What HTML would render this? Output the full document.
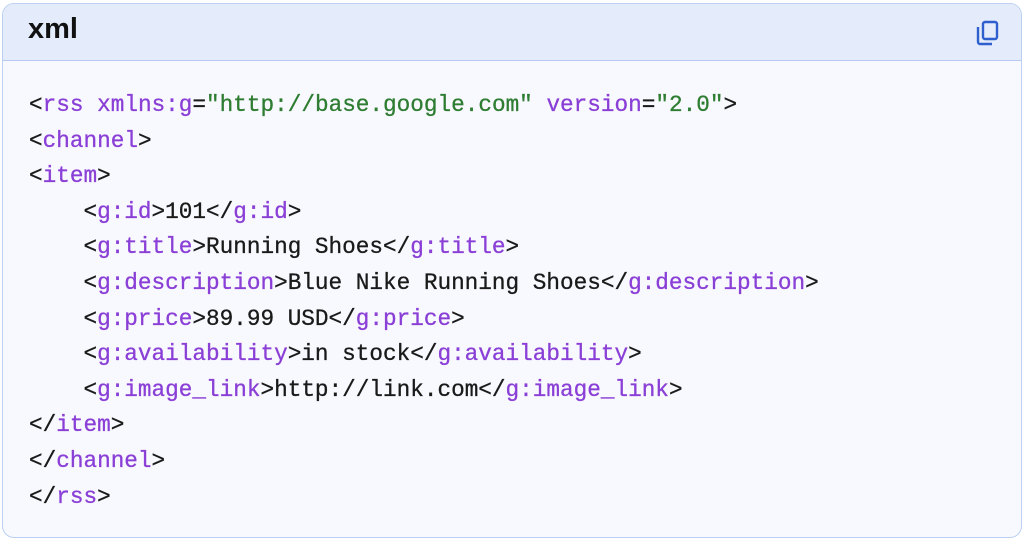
<!DOCTYPE html>
<html><head><style>
html,body{margin:0;padding:0;background:#fff;width:1024px;height:539px;overflow:hidden}
.box{position:absolute;left:2px;top:3px;width:1018px;height:533px;border:1px solid #bcd0f3;border-radius:12px;background:#f8f9fe;overflow:hidden}
.hd{height:56px;background:#e4ecfb;border-bottom:1px solid #b5cbf2;position:relative}
.hd span{position:absolute;left:25px;top:9px;font:bold 29px "Liberation Sans",sans-serif;color:#111}
.hd svg{position:absolute;left:972px;top:15px}
pre{position:absolute;left:26px;top:84px;margin:0;font:22.7px/35.6px "Liberation Mono",monospace;color:#1a1a1a;-webkit-text-stroke:0.3px currentColor}
.t{color:#8a3fd6}.s{color:#2e7d32}
</style></head><body>
<div class="box">
<div class="hd"><span>xml</span>
<svg width="26" height="28" viewBox="0 0 26 28" fill="none" stroke="#2f5fcf" stroke-width="2.4"><rect x="8" y="3" width="14" height="17" rx="2"/><path d="M3 8v15a2 2 0 0 0 2 2h12"/></svg>
</div>
<pre>&lt;<span class="t">rss</span> <span class="t">xmlns:g</span>=<span class="s">"http://base.google.com"</span> <span class="t">version</span>=<span class="s">"2.0"</span>&gt;
&lt;<span class="t">channel</span>&gt;
&lt;<span class="t">item</span>&gt;
    &lt;<span class="t">g:id</span>&gt;101&lt;/<span class="t">g:id</span>&gt;
    &lt;<span class="t">g:title</span>&gt;Running Shoes&lt;/<span class="t">g:title</span>&gt;
    &lt;<span class="t">g:description</span>&gt;Blue Nike Running Shoes&lt;/<span class="t">g:description</span>&gt;
    &lt;<span class="t">g:price</span>&gt;89.99 USD&lt;/<span class="t">g:price</span>&gt;
    &lt;<span class="t">g:availability</span>&gt;in stock&lt;/<span class="t">g:availability</span>&gt;
    &lt;<span class="t">g:image_link</span>&gt;http://link.com&lt;/<span class="t">g:image_link</span>&gt;
&lt;/<span class="t">item</span>&gt;
&lt;/<span class="t">channel</span>&gt;
&lt;/<span class="t">rss</span>&gt;</pre>
</div>
</body></html>
